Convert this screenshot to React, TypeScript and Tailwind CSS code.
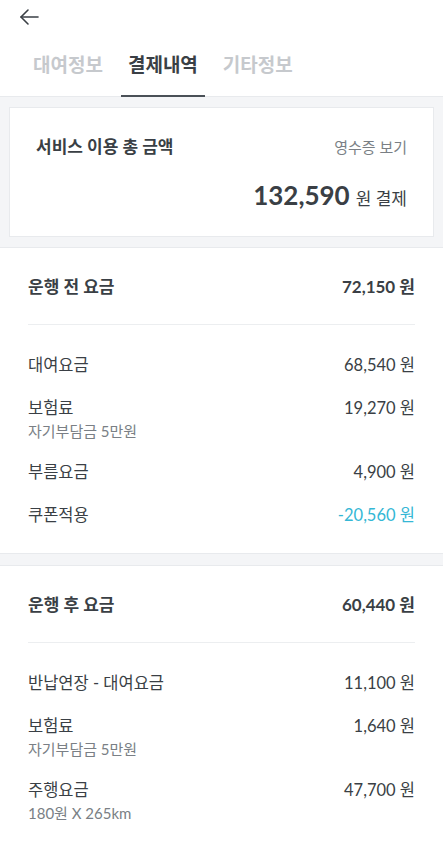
import React from "react";

const font = { fontFamily: "Lato, 'Noto Sans CJK KR', 'Noto Sans', sans-serif" };

function Row({ label, amount, sub, cyan }: { label: string; amount: string; sub?: string; cyan?: boolean }) {
  return (
    <div className="flex flex-col">
      <div className="flex items-center justify-between h-6">
        <span className="text-[16.5px] text-[#3a3f45]">{label}</span>
        <span className={"text-[16.5px] " + (cyan ? "text-[#35b7d5]" : "text-[#3a3f45]")}>{amount}</span>
      </div>
      {sub && <div className="text-[15px] leading-5 h-5 mt-px text-[#7a7f85]">{sub}</div>}
    </div>
  );
}

function Section({ title, total, children }: { title: string; total: string; children: React.ReactNode }) {
  return (
    <div className="bg-white border-y border-[#e8eaed] px-7">
      <div className="flex items-center justify-between h-6 mt-[27px]">
        <span className="text-[17px] font-bold text-[#3a3f45]">{title}</span>
        <span className="text-[17px] font-bold text-[#3a3f45]">{total}</span>
      </div>
      <div className="h-px bg-[#eceef0] mt-[25px]" />
      <div className="flex flex-col gap-[19px] pt-7 pb-[26px]">{children}</div>
    </div>
  );
}

export default function App() {
  return (
    <div className="w-[443px] min-h-[844px] bg-[#f4f5f7]" style={font}>
      <div className="bg-white">
        <div className="h-[34px] flex items-center pl-[19px]">
          <svg width="20" height="20" viewBox="0 0 20 20" fill="none" stroke="#3a3f45" strokeWidth="1.6" strokeLinecap="round" strokeLinejoin="round">
            <path d="M19 10H2" />
            <path d="M9 3L2 10L9 17" />
          </svg>
        </div>
        <div className="flex h-[63px] border-b border-[#e8eaed] pl-[26px]">
          <div className="px-[7px] flex items-center text-[19px] font-bold text-[#c6c9cd]">대여정보</div>
          <div className="px-[7px] ml-[11px] flex items-center text-[19px] font-bold text-[#3a3f45] border-b-2 border-[#4a5057] relative top-px">결제내역</div>
          <div className="px-[7px] ml-[11px] flex items-center text-[19px] font-bold text-[#c6c9cd]">기타정보</div>
        </div>
      </div>
      <div className="pt-[10px] px-[9px]">
        <div className="bg-white border border-[#e8eaed] h-[130px] px-[26px]">
          <div className="flex items-center justify-between h-6 mt-[27px]">
            <span className="text-[17px] font-bold text-[#3a3f45]">서비스 이용 총 금액</span>
            <span className="text-[15px] text-[#7a7f85]">영수증 보기</span>
          </div>
          <div className="flex items-baseline justify-end mt-[17px]">
            <span className="text-[26px] font-bold text-[#3a3f45]">132,590</span>
            <span className="text-[17px] text-[#3a3f45] ml-1.5">원 결제</span>
          </div>
        </div>
      </div>
      <div className="mt-[10px]">
        <Section title="운행 전 요금" total="72,150 원">
          <Row label="대여요금" amount="68,540 원" />
          <Row label="보험료" amount="19,270 원" sub="자기부담금 5만원" />
          <Row label="부름요금" amount="4,900 원" />
          <Row label="쿠폰적용" amount="-20,560 원" cyan />
        </Section>
      </div>
      <div className="mt-[11px]">
        <Section title="운행 후 요금" total="60,440 원">
          <Row label="반납연장 - 대여요금" amount="11,100 원" />
          <Row label="보험료" amount="1,640 원" sub="자기부담금 5만원" />
          <Row label="주행요금" amount="47,700 원" sub="180원 X 265km" />
        </Section>
      </div>
    </div>
  );
}
